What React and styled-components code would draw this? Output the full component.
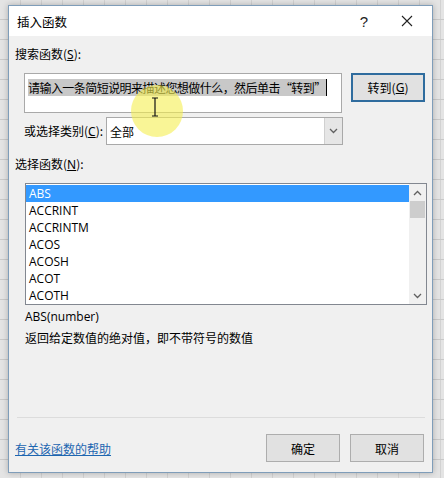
import React from "react";
import styled, { createGlobalStyle } from "styled-components";

const Global = createGlobalStyle`
  html, body { margin: 0; padding: 0; }
  body {
    width: 444px; height: 478px; overflow: hidden;
    background-color: #e4e4e4;
    background-image:
      repeating-linear-gradient(to bottom, transparent 0 19px, #c9c9c9 19px 20px),
      repeating-linear-gradient(to right, transparent 0 20px, #d2d2d2 20px 21px);
    font-family: "Noto Sans", "Noto Sans CJK SC", sans-serif;
    font-size: 12px;
    color: #000;
  }
`;

const Page = styled.div`
  padding: 5px 0 0 8px;
`;

const Dialog = styled.div`
  position: relative;
  width: 425px;
  height: 468px;
  box-sizing: border-box;
  border: 1px solid #7f9db9;
  background: #f0f0f0;
  display: flex;
  flex-direction: column;
  box-shadow: 0 0 6px rgba(0,0,0,0.25);
`;

const TitleBar = styled.div`
  height: 30px;
  background: #fff;
  display: flex;
  align-items: center;
  padding: 0 12px 0 8px;
  font-family: "Noto Sans CJK SC", sans-serif;
  font-size: 12.5px;
`;

const Title = styled.div`
  flex: 1;
`;

const TitleBtn = styled.div`
  width: ${p => p.$w}px;
  margin-left: ${p => p.$ml || 0}px;
  display: flex;
  justify-content: center;
  font-size: ${p => p.$size}px;
  color: #222;
  font-family: "Liberation Sans", sans-serif;
`;

const Body = styled.div`
  flex: 1;
  display: flex;
  flex-direction: column;
  padding: 10px 0 0 6px;
  font-family: "Noto Sans CJK SC", sans-serif;
`;

const Label = styled.div`
  line-height: 16px;
  margin-left: ${p => p.$indent || 0}px;
  margin-top: ${p => p.$mt || 0}px;
`;

const U = styled.span`
  text-decoration: underline;
  font-family: "Noto Sans", sans-serif;
`;

const Row = styled.div`
  display: flex;
  align-items: ${p => p.$align || "flex-start"};
  margin-top: ${p => p.$mt || 0}px;
  margin-left: ${p => p.$indent || 0}px;
`;

const SearchBox = styled.div`
  width: 318px;
  height: 40px;
  box-sizing: border-box;
  border: 1px solid #a9a9a9;
  background: #fff;
  padding: 5px 0 0 3px;
  line-height: 17px;
  letter-spacing: -0.55px;
`;

const Selected = styled.span`
  background: #c8c8c8;
  border-right: 1px solid #000;
`;

const Button = styled.div`
  width: ${p => p.$w || 74}px;
  height: ${p => p.$h || 28}px;
  box-sizing: border-box;
  border: ${p => (p.$primary ? "2px solid #2f6c9e" : "1px solid #adadad")};
  background: #e1e1e1;
  display: flex;
  align-items: center;
  justify-content: center;
  margin-left: ${p => p.$ml || 0}px;
`;

const CatLabel = styled.div`
  width: 82px;
  line-height: 16px;
`;

const Select = styled.div`
  width: 237px;
  height: 28px;
  box-sizing: border-box;
  border: 1px solid #a9a9a9;
  background: #fff;
  display: flex;
  align-items: center;
  padding-left: 3px;
`;

const SelectText = styled.div`
  flex: 1;
`;

const DropBtn = styled.div`
  width: 17px;
  height: 26px;
  background: #e6e6e6;
  border-left: 1px solid #d0d0d0;
  display: flex;
  align-items: center;
  justify-content: center;
`;

const List = styled.div`
  width: 402px;
  height: 122px;
  box-sizing: border-box;
  border: 1px solid #828790;
  background: #fff;
  display: flex;
  margin-top: 10px;
  margin-left: 10px;
`;

const Items = styled.div`
  flex: 1;
  padding-top: 1px;
  font-family: "Open Sans", "Noto Sans", sans-serif;
  font-size: 12px;
`;

const Item = styled.div`
  height: 17px;
  line-height: 17px;
  padding-left: 3px;
  background: ${p => (p.$sel ? "#3399ff" : "transparent")};
  color: ${p => (p.$sel ? "#fff" : "#000")};
`;

const Scroll = styled.div`
  width: 17px;
  background: #f0f0f0;
  display: flex;
  flex-direction: column;
`;

const ScrollArrow = styled.div`
  height: 17px;
  display: flex;
  align-items: center;
  justify-content: center;
`;

const Thumb = styled.div`
  height: 17px;
  margin: 0 1px;
  background: #cdcdcd;
`;

const ScrollSpacer = styled.div`
  flex: 1;
`;

const Sig = styled.div`
  margin: 4px 0 0 10px;
  line-height: 16px;
  font-family: "Open Sans", "Noto Sans", sans-serif;
`;

const Desc = styled.div`
  margin: 5px 0 0 10px;
  line-height: 16px;
`;

const Spacer = styled.div`
  flex: 1;
`;

const Separator = styled.div`
  height: 1px;
  background: #dcdcdc;
  margin: 0 7px 0 2px;
`;

const Footer = styled.div`
  display: flex;
  align-items: center;
  height: 28px;
  margin: 16px 8px 10px 0;
`;

const HelpLink = styled.div`
  flex: 1;
  color: #1d66b0;
  text-decoration: underline;
`;

const Highlight = styled.div`
  position: absolute;
  left: 122px;
  top: 79px;
  width: 52px;
  height: 52px;
  border-radius: 50%;
  background: rgba(245, 238, 80, 0.6);
  pointer-events: none;
`;

const Cursor = styled.svg`
  position: absolute;
  left: 142px;
  top: 91px;
`;

const Chevron = ({ d }) => (
  <svg width="9" height="6" viewBox="0 0 9 6">
    <path d={d} fill="none" stroke="#606060" strokeWidth="1.3" />
  </svg>
);

const funcs = ["ABS", "ACCRINT", "ACCRINTM", "ACOS", "ACOSH", "ACOT", "ACOTH"];

export default function App() {
  return (
    <Page>
      <Global />
      <Dialog>
        <TitleBar>
          <Title>插入函数</Title>
          <TitleBtn $w={24} $size={15}>?</TitleBtn>
          <TitleBtn $w={26} $ml={18} $size={17}>
            <svg width="12" height="12" viewBox="0 0 12 12">
              <path d="M1 1 L11 11 M11 1 L1 11" stroke="#222" strokeWidth="1.1" />
            </svg>
          </TitleBtn>
        </TitleBar>
        <Body>
          <Label>
            搜索函数(<U>S</U>):
          </Label>
          <Row $mt={10} $indent={9}>
            <SearchBox>
              <Selected>请输入一条简短说明来描述您想做什么，然后单击“转到”</Selected>
            </SearchBox>
            <Button $primary $w={74} $h={29} $ml={9}>
              转到(<U>G</U>)
            </Button>
          </Row>
          <Row $mt={4} $indent={9} $align="center">
            <CatLabel>
              或选择类别(<U>C</U>):
            </CatLabel>
            <Select>
              <SelectText>全部</SelectText>
              <DropBtn>
                <Chevron d="M1 1 L4.5 4.5 L8 1" />
              </DropBtn>
            </Select>
          </Row>
          <Label $mt={11}>
            选择函数(<U>N</U>):
          </Label>
          <List>
            <Items>
              {funcs.map((f, i) => (
                <Item key={f} $sel={i === 0}>
                  {f}
                </Item>
              ))}
            </Items>
            <Scroll>
              <ScrollArrow>
                <Chevron d="M1 5 L4.5 1.5 L8 5" />
              </ScrollArrow>
              <Thumb />
              <ScrollSpacer />
              <ScrollArrow>
                <Chevron d="M1 1 L4.5 4.5 L8 1" />
              </ScrollArrow>
            </Scroll>
          </List>
          <Sig>ABS(number)</Sig>
          <Desc>返回给定数值的绝对值，即不带符号的数值</Desc>
          <Spacer />
          <Separator />
          <Footer>
            <HelpLink>有关该函数的帮助</HelpLink>
            <Button>确定</Button>
            <Button $ml={10}>取消</Button>
          </Footer>
        </Body>
        <Highlight />
        <Cursor width="8" height="20" viewBox="0 0 8 20">
          <path d="M1 1 H7 M4 1 V19 M1 19 H7" stroke="#111" strokeWidth="1.2" fill="none" />
        </Cursor>
      </Dialog>
    </Page>
  );
}
